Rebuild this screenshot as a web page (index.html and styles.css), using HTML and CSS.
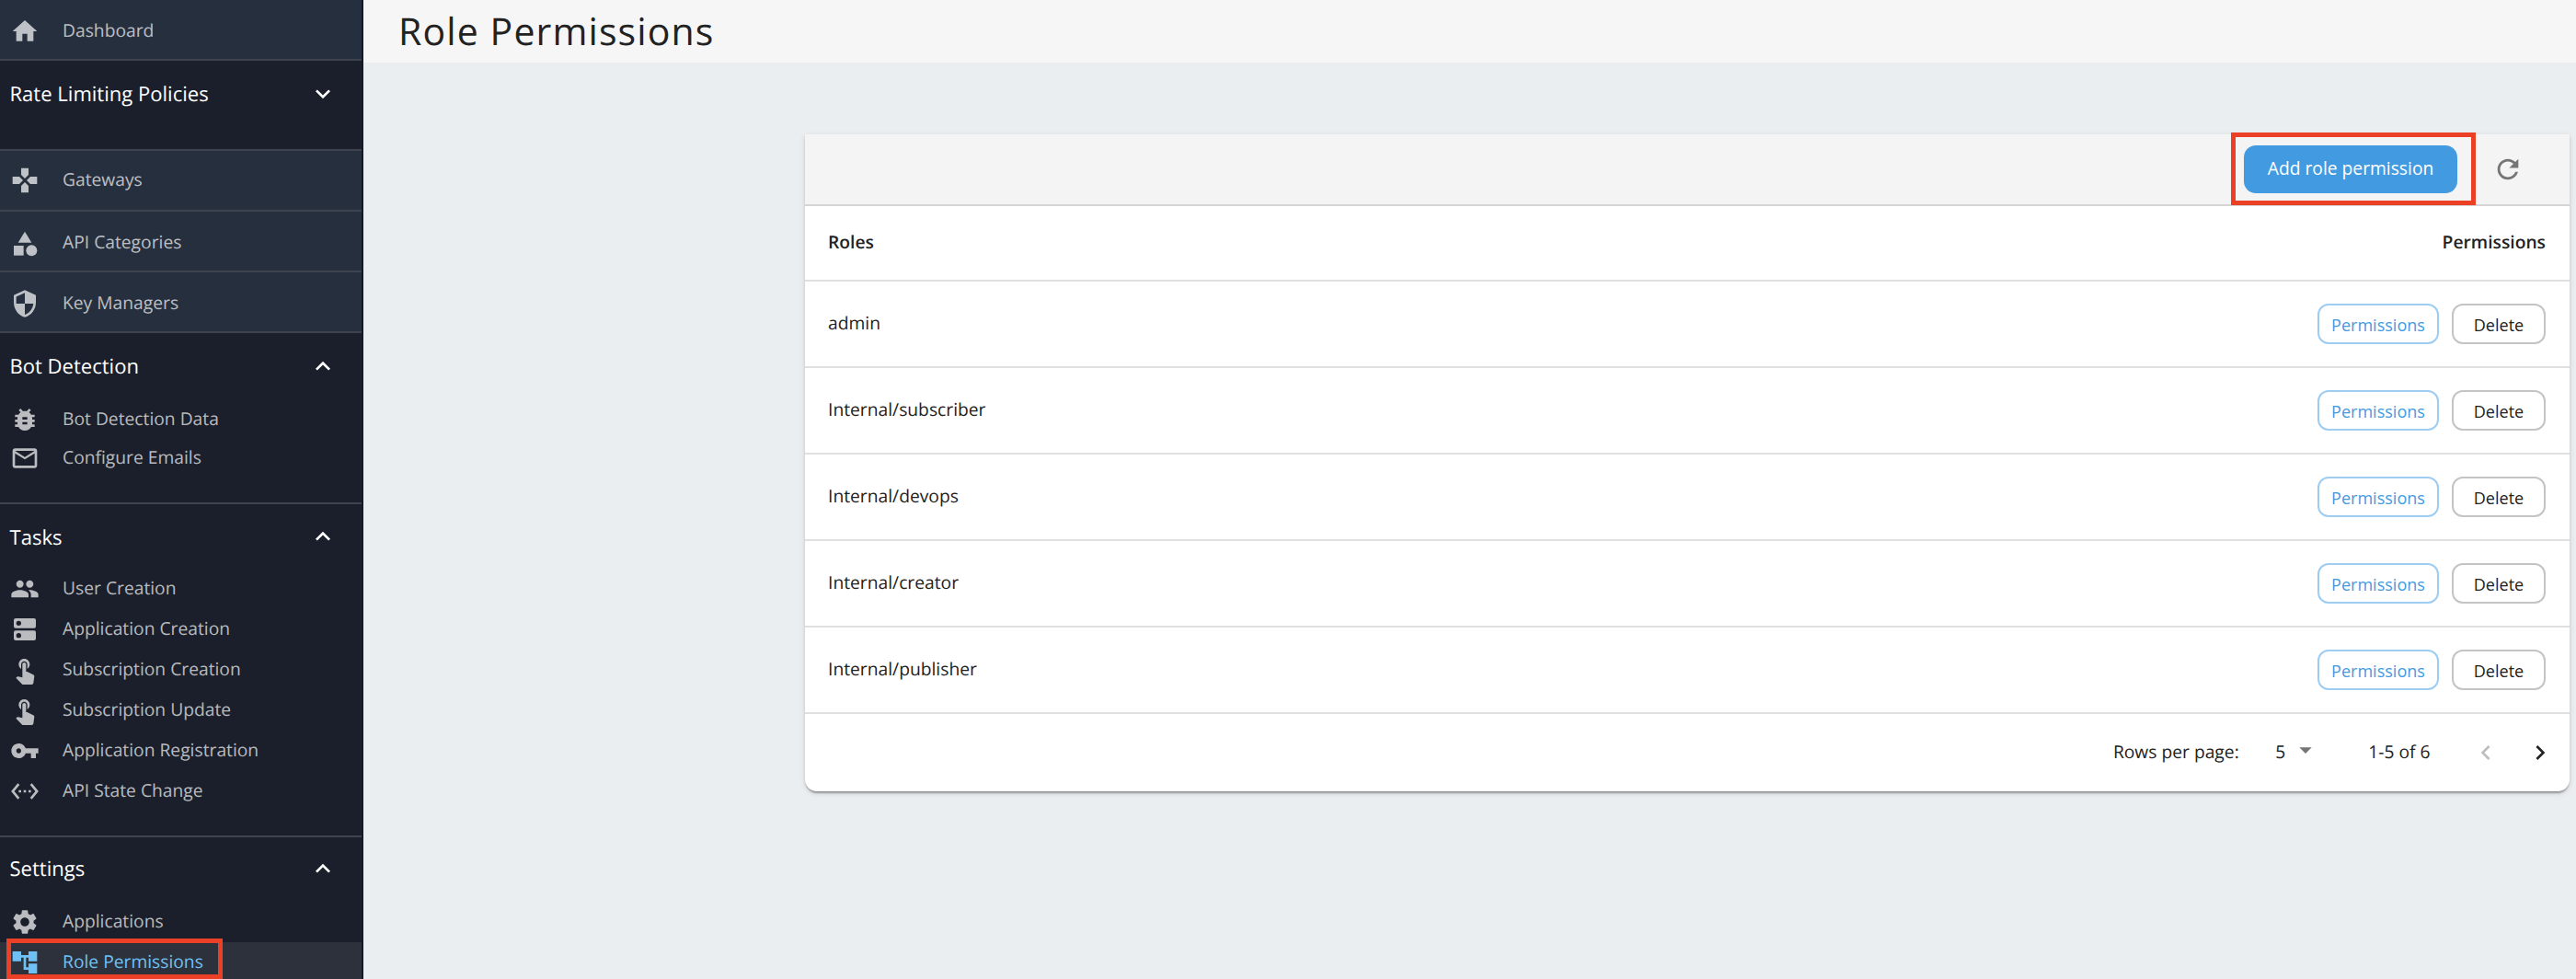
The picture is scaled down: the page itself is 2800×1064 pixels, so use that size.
FILE: index.html
```html
<!DOCTYPE html>
<html lang="en">
<head>
<meta charset="utf-8">
<title>Role Permissions</title>
<link rel="stylesheet" href="styles.css">
</head>
<body>
<div class="app">
  <nav class="sidebar">
    <a class="nav-item nav-item--block nav-item--home">
      <svg class="icon" viewBox="0 0 24 24"><path d="M10 20v-6h4v6h5v-8h3L12 3 2 12h3v8z"/></svg>
      <span class="nav-label">Dashboard</span>
    </a>

    <section class="nav-section nav-section--rate">
      <h2 class="nav-heading">Rate Limiting Policies
        <svg class="icon" viewBox="0 0 24 24"><path d="M16.59 8.59L12 13.17 7.41 8.59 6 10l6 6 6-6z"/></svg>
      </h2>
    </section>

    <a class="nav-item nav-item--block">
      <svg class="icon" viewBox="0 0 24 24"><path d="M15 7.5V2H9v5.5l3 3 3-3zM7.500 9H2v6h5.500l3-3-3-3zM9 16.500V22h6v-5.500l-3-3-3 3zM16.500 9l-3 3 3 3H22V9h-5.500z"/></svg>
      <span class="nav-label">Gateways</span>
    </a>
    <a class="nav-item nav-item--block nav-item--categories">
      <svg class="icon" viewBox="0 0 24 24"><path d="M12 2l-5.500 9h11z"/><circle cx="17.500" cy="17.500" r="4.500"/><path d="M3 13.500h8v8H3z"/></svg>
      <span class="nav-label">API Categories</span>
    </a>
    <a class="nav-item nav-item--block nav-item--keys">
      <svg class="icon" viewBox="0 0 24 24"><path d="M12 1L3 5v6c0 5.550 3.840 10.740 9 12 5.160-1.260 9-6.450 9-12V5l-9-4zm0 10.990h7c-.53 4.120-3.280 7.790-7 8.940V12H5V6.300l7-3.110v8.800z"/></svg>
      <span class="nav-label">Key Managers</span>
    </a>

    <section class="nav-section nav-section--bot">
      <h2 class="nav-heading">Bot Detection
        <svg class="icon" viewBox="0 0 24 24"><path d="M12 8l-6 6 1.410 1.410L12 10.830l4.590 4.580L18 14z"/></svg>
      </h2>
      <a class="nav-item">
        <svg class="icon" viewBox="0 0 24 24"><path d="M20 8h-2.810c-.45-.78-1.070-1.450-1.820-1.960L17 4.410 15.590 3l-2.170 2.170C12.960 5.060 12.490 5 12 5c-.49 0-.96.06-1.410.17L8.410 3 7 4.410l1.620 1.630C7.880 6.550 7.260 7.220 6.810 8H4v2h2.090c-.05.33-.09.66-.09 1v1H4v2h2v1c0 .34.04.67.09 1H4v2h2.810c1.040 1.790 2.970 3 5.190 3s4.150-1.210 5.190-3H20v-2h-2.090c.05-.33.09-.66.09-1v-1h2v-2h-2v-1c0-.34-.04-.67-.09-1H20V8zm-6 8h-4v-2h4v2zm0-4h-4v-2h4v2z"/></svg>
        <span class="nav-label">Bot Detection Data</span>
      </a>
      <a class="nav-item">
        <svg class="icon" viewBox="0 0 24 24"><path d="M22 6c0-1.100-.9-2-2-2H4c-1.100 0-2 .9-2 2v12c0 1.100.9 2 2 2h16c1.100 0 2-.9 2-2V6zm-2 0l-8 5-8-5h16zm0 12H4V8l8 5 8-5v10z"/></svg>
        <span class="nav-label">Configure Emails</span>
      </a>
    </section>

    <section class="nav-section nav-section--tasks">
      <h2 class="nav-heading">Tasks
        <svg class="icon" viewBox="0 0 24 24"><path d="M12 8l-6 6 1.410 1.410L12 10.830l4.590 4.580L18 14z"/></svg>
      </h2>
      <a class="nav-item">
        <svg class="icon" viewBox="0 0 24 24"><path d="M16 11c1.660 0 2.990-1.340 2.990-3S17.660 5 16 5c-1.660 0-3 1.340-3 3s1.340 3 3 3zm-8 0c1.660 0 2.990-1.340 2.990-3S9.660 5 8 5C6.340 5 5 6.340 5 8s1.340 3 3 3zm0 2c-2.330 0-7 1.170-7 3.500V19h14v-2.500c0-2.330-4.670-3.500-7-3.500zm8 0c-.29 0-.62.02-.97.05 1.160.84 1.970 1.970 1.970 3.450V19h6v-2.500c0-2.330-4.670-3.500-7-3.500z"/></svg>
        <span class="nav-label">User Creation</span>
      </a>
      <a class="nav-item">
        <svg class="icon" viewBox="0 0 24 24"><path fill-rule="evenodd" d="M4.500 3h15A1.500 1.500 0 0 1 21 4.500v5a1.500 1.500 0 0 1-1.500 1.500h-15A1.500 1.500 0 0 1 3 9.500v-5A1.500 1.500 0 0 1 4.500 3zM7 5a2 2 0 1 0 0 4 2 2 0 0 0 0-4zM4.500 13h15a1.500 1.500 0 0 1 1.500 1.500v5a1.500 1.500 0 0 1-1.500 1.500h-15A1.500 1.500 0 0 1 3 19.500v-5A1.500 1.500 0 0 1 4.500 13zM7 15a2 2 0 1 0 0 4 2 2 0 0 0 0-4z"/></svg>
        <span class="nav-label">Application Creation</span>
      </a>
      <a class="nav-item">
        <svg class="icon" viewBox="0 0 24 24"><path d="M9 11.240V7.500C9 6.120 10.120 5 11.500 5S14 6.120 14 7.500v3.740c1.210-.81 2-2.180 2-3.740C16 5.010 13.990 3 11.500 3S7 5.010 7 7.500c0 1.560.79 2.930 2 3.740zm9.840 4.630l-4.540-2.260c-.17-.07-.35-.11-.54-.11H13v-6c0-.83-.67-1.500-1.500-1.500S10 6.670 10 7.500v10.740l-3.430-.72c-.08-.01-.15-.03-.24-.03-.31 0-.59.13-.79.33l-.79.8 4.940 4.940c.27.27.65.44 1.060.44h6.790c.75 0 1.330-.55 1.440-1.280l.75-5.270c.01-.07.02-.14.02-.2 0-.62-.38-1.160-.91-1.380z"/></svg>
        <span class="nav-label">Subscription Creation</span>
      </a>
      <a class="nav-item">
        <svg class="icon" viewBox="0 0 24 24"><path d="M9 11.240V7.500C9 6.120 10.120 5 11.500 5S14 6.120 14 7.500v3.740c1.210-.81 2-2.180 2-3.740C16 5.010 13.990 3 11.500 3S7 5.010 7 7.500c0 1.560.79 2.930 2 3.740zm9.840 4.630l-4.540-2.260c-.17-.07-.35-.11-.54-.11H13v-6c0-.83-.67-1.500-1.500-1.500S10 6.670 10 7.500v10.740l-3.430-.72c-.08-.01-.15-.03-.24-.03-.31 0-.59.13-.79.33l-.79.8 4.940 4.940c.27.27.65.44 1.060.44h6.790c.75 0 1.330-.55 1.440-1.280l.75-5.270c.01-.07.02-.14.02-.2 0-.62-.38-1.160-.91-1.380z"/></svg>
        <span class="nav-label">Subscription Update</span>
      </a>
      <a class="nav-item">
        <svg class="icon" viewBox="0 0 24 24"><path d="M12.650 10C11.830 7.670 9.610 6 7 6c-3.310 0-6 2.690-6 6s2.690 6 6 6c2.610 0 4.830-1.670 5.650-4H17v4h4v-4h2v-4H12.650zM7 14c-1.100 0-2-.9-2-2s.9-2 2-2 2 .9 2 2-.9 2-2 2z"/></svg>
        <span class="nav-label">Application Registration</span>
      </a>
      <a class="nav-item">
        <svg class="icon" viewBox="0 0 24 24"><path d="M7.770 6.760L6.230 5.480.82 12l5.410 6.520 1.540-1.280L3.420 12l4.350-5.240zM7 13h2v-2H7v2zm10-2h-2v2h2v-2zm-6 2h2v-2h-2v2zm6.770-7.520l-1.540 1.280L20.580 12l-4.350 5.240 1.540 1.280L23.180 12l-5.410-6.520z"/></svg>
        <span class="nav-label">API State Change</span>
      </a>
    </section>

    <section class="nav-section nav-section--settings">
      <h2 class="nav-heading">Settings
        <svg class="icon" viewBox="0 0 24 24"><path d="M12 8l-6 6 1.410 1.410L12 10.830l4.590 4.580L18 14z"/></svg>
      </h2>
      <a class="nav-item">
        <svg class="icon" viewBox="0 0 24 24"><path d="M19.140 12.940c.04-.3.060-.61.060-.94 0-.32-.02-.64-.07-.94l2.030-1.580c.18-.14.23-.41.12-.61l-1.920-3.320c-.12-.22-.37-.29-.59-.22l-2.390.96c-.5-.38-1.030-.7-1.620-.94l-.36-2.540c-.04-.24-.24-.41-.48-.41h-3.840c-.24 0-.43.17-.47.41l-.36 2.540c-.59.24-1.130.57-1.620.94l-2.390-.96c-.22-.08-.47 0-.59.22L2.740 8.870c-.12.21-.08.47.12.61l2.030 1.580c-.05.3-.09.63-.09.94s.02.64.07.94l-2.030 1.580c-.18.14-.23.41-.12.61l1.920 3.320c.12.22.37.29.59.22l2.390-.96c.5.38 1.030.7 1.620.94l.36 2.540c.05.24.24.41.48.41h3.840c.24 0 .44-.17.47-.41l.36-2.540c.59-.24 1.130-.56 1.620-.94l2.390.96c.22.08.47 0 .59-.22l1.920-3.320c.12-.22.07-.47-.12-.61l-2.010-1.580zM12 15.600c-1.980 0-3.600-1.620-3.600-3.600s1.620-3.600 3.600-3.600 3.600 1.620 3.600 3.600-1.620 3.600-3.600 3.600z"/></svg>
        <span class="nav-label">Applications</span>
      </a>
      <a class="nav-item nav-item--active">
        <svg class="icon" viewBox="0 0 24 24"><path d="M22 11V3h-7v3H9V3H2v8h7V8h2v10h4v3h7v-8h-7v3h-2V8h2v3z"/></svg>
        <span class="nav-label">Role Permissions</span>
        <span class="highlight highlight--nav"></span>
      </a>
    </section>
  </nav>

  <main class="main">
    <header class="page-header"><h1 class="page-title">Role Permissions</h1></header>
    <div class="content">
      <div class="card">
        <div class="toolbar">
          <div class="add-wrap">
            <button class="btn btn--primary">Add role permission</button>
            <span class="highlight highlight--add"></span>
          </div>
          <svg class="icon refresh" viewBox="0 0 24 24"><path d="M17.650 6.350C16.200 4.900 14.210 4 12 4c-4.420 0-7.990 3.580-7.990 8s3.570 8 7.990 8c3.730 0 6.840-2.550 7.730-6h-2.080c-.82 2.330-3.040 4-5.650 4-3.310 0-6-2.690-6-6s2.690-6 6-6c1.660 0 3.140.69 4.220 1.780L13 11h7V4l-2.350 2.350z"/></svg>
        </div>
        <div class="row row--head"><span class="cell">Roles</span><span class="cell">Permissions</span></div>
        <div class="row"><span class="cell">admin</span><span class="actions"><button class="btn btn--outline btn--blue">Permissions</button><button class="btn btn--outline">Delete</button></span></div>
        <div class="row"><span class="cell">Internal/subscriber</span><span class="actions"><button class="btn btn--outline btn--blue">Permissions</button><button class="btn btn--outline">Delete</button></span></div>
        <div class="row"><span class="cell">Internal/devops</span><span class="actions"><button class="btn btn--outline btn--blue">Permissions</button><button class="btn btn--outline">Delete</button></span></div>
        <div class="row"><span class="cell">Internal/creator</span><span class="actions"><button class="btn btn--outline btn--blue">Permissions</button><button class="btn btn--outline">Delete</button></span></div>
        <div class="row"><span class="cell">Internal/publisher</span><span class="actions"><button class="btn btn--outline btn--blue">Permissions</button><button class="btn btn--outline">Delete</button></span></div>
        <div class="pager">
          <span class="cell">Rows per page:</span>
          <span class="page-size"><span class="cell">5</span><svg class="icon" viewBox="0 0 24 24"><path d="M7 10l5 5 5-5z"/></svg></span>
          <span class="cell range">1-5 of 6</span>
          <svg class="icon prev" viewBox="0 0 24 24"><path d="M15.410 7.410L14 6l-6 6 6 6 1.410-1.410L10.830 12z"/></svg>
          <svg class="icon next" viewBox="0 0 24 24"><path d="M10 6L8.590 7.410 13.170 12l-4.580 4.590L10 18l6-6z"/></svg>
        </div>
      </div>
    </div>
  </main>
</div>
</body>
</html>
```
FILE: styles.css
```css
* { box-sizing: border-box; }

body {
  margin: 0;
  font-family: "Open Sans", "Noto Sans", sans-serif;
  font-size: 19.25px;
  color: #222;
  background: #eaeef1;
  text-rendering: geometricPrecision;
}

h1, h2 { margin: 0; font-weight: 400; }

.icon {
  display: block;
  flex: none;
  width: 32px;
  height: 32px;
  fill: currentColor;
}

.app {
  display: flex;
  height: 1064px;
  overflow: hidden;
}

/* Sidebar */
.sidebar {
  flex: none;
  width: 395px;
  background: #1a1f2b;
  border-right: 2px solid #151a25;
  color: rgba(255, 255, 255, .7);
}

.nav-item {
  position: relative;
  display: flex;
  align-items: center;
  gap: 25px;
  height: 44px;
  padding-left: 11px;
}

.nav-label { padding-bottom: 4px; }

.nav-item--block {
  height: 66px;
  background: #262f3e;
  border-bottom: 2px solid #3d444f;
}

.nav-item--home { padding-top: 4px; }
.nav-item--categories { padding-top: 5px; }
.nav-item--keys { padding-top: 4px; }

.nav-section { border-bottom: 2px solid #3d444f; }

.nav-heading {
  display: flex;
  align-items: center;
  justify-content: space-between;
  height: 72px;
  padding: 0 26px 2px 10.5px;
  font-size: 22.05px;
  color: #fff;
}

.nav-section--rate { height: 98px; }
.nav-section--rate .nav-heading { padding-bottom: 0; }

.nav-section--bot { height: 186px; }
.nav-section--bot .nav-item { height: 42px; }
.nav-section--bot .nav-heading { height: 73px; }

.nav-section--tasks { height: 362px; }
.nav-section--tasks .nav-heading { height: 70px; padding: 2px 26px 0 10.5px; }
.nav-section--tasks .nav-heading .icon { margin-top: -2px; }

.nav-section--settings .nav-heading { height: 70px; }
.nav-section--settings { border-bottom: 0; }

.nav-item--active {
  background: #2d313b;
  color: #6fc1f5;
}

.highlight {
  position: absolute;
  border: 5px solid #eb4025;
  pointer-events: none;
}

.highlight--nav { left: 7px; top: -4px; width: 235px; height: 44px; }

/* Main area */
.main { flex: 1; min-width: 0; }

.page-header {
  display: flex;
  align-items: center;
  height: 68px;
  padding-left: 38px;
  background: #f6f6f6;
}

.page-title {
  font-size: 41px;
  letter-spacing: 1.12px;
}

.content { padding: 78px 7px 0 480px; }

.card {
  background: #fff;
  border-radius: 0 0 13px 13px;
  box-shadow: 0 4px 2px -2px rgba(0, 0, 0, .2), 0 2px 2px rgba(0, 0, 0, .14), 0 2px 6px rgba(0, 0, 0, .12);
}

.toolbar {
  display: flex;
  align-items: center;
  justify-content: flex-end;
  gap: 38px;
  height: 78px;
  padding-right: 50px;
  background: #f4f4f4;
  border-bottom: 2px solid #d5d5d5;
}

.refresh { width: 34px; height: 34px; color: #757575; }

.add-wrap { position: relative; }

.highlight--add { left: -14px; top: -14px; width: 266px; height: 79px; }

.btn {
  font: inherit;
  margin: 0;
  cursor: pointer;
}

.btn--primary {
  display: block;
  width: 232px;
  height: 52px;
  padding: 0 0 3px;
  border: 0;
  border-radius: 13px;
  background: #429be1;
  color: #fff;
}

.row {
  display: flex;
  align-items: center;
  justify-content: space-between;
  height: 94px;
  padding: 0 26px 0 25px;
  border-bottom: 2px solid #e0e0e0;
}

.row--head { height: 82px; font-weight: 600; }

.cell { padding-bottom: 3px; }

.actions { display: flex; gap: 14px; }

.btn--outline {
  width: 102px;
  height: 44px;
  padding: 2px 0 0;
  border: 2px solid #c4c4c4;
  border-radius: 12px;
  background: #fff;
  color: #222;
  font-size: 18.05px;
}

.btn--blue {
  width: 132px;
  border-color: #9fcdf2;
  color: #429be1;
}

.pager {
  display: flex;
  align-items: center;
  justify-content: flex-end;
  height: 84px;
  padding-right: 16px;
}

.page-size {
  display: flex;
  align-items: center;
  margin-left: 39.5px;
}

.page-size .icon { margin: -6px 0 0 5.5px; color: #757575; }

.range { margin-left: 52.5px; }
.prev { margin-left: 44.5px; color: #bdbdbd; }
.next { margin-left: 27px; }
```
